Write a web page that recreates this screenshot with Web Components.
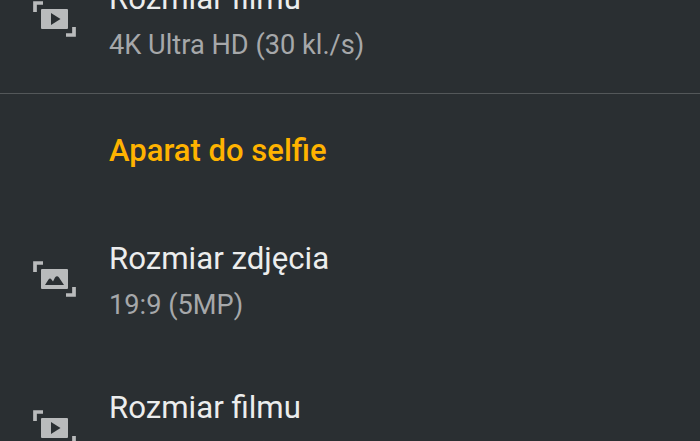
<!DOCTYPE html>
<html>
<head>
<meta charset="utf-8">
<style>
  html, body { margin: 0; height: 441px; overflow: hidden; background: #2a2f32; }
  body { font-family: Roboto, "Liberation Sans", sans-serif; }
  settings-list { margin-top: -47px; }
</style>
</head>
<body>
<settings-list>
  <setting-row icon="video" title="Rozmiar filmu" value="4K Ultra HD (30 kl./s)" divider></setting-row>
  <setting-header>Aparat do selfie</setting-header>
  <setting-row icon="photo" title="Rozmiar zdjęcia" value="19:9 (5MP)"></setting-row>
  <setting-row icon="video" title="Rozmiar filmu" value="4K Ultra HD (30 kl./s)"></setting-row>
</settings-list>

<script>
class SettingsList extends HTMLElement {
  constructor() {
    super();
    this.attachShadow({ mode: 'open' }).innerHTML = `
      <style>
        :host { display: flex; flex-direction: column; }
      </style>
      <slot></slot>
    `;
  }
}

class SettingHeader extends HTMLElement {
  constructor() {
    super();
    this.attachShadow({ mode: 'open' }).innerHTML = `
      <style>
        :host {
          display: flex;
          align-items: center;
          height: 112px;
          padding: 0 0 2px 109px;
          color: #ffb300;
          font-size: 31px;
          font-weight: 500;
        }
      </style>
      <slot></slot>
    `;
  }
}

const ICONS = {
  video: '<path d="M18 12v12l9.5-6z" fill="#2a2f32"/>',
  photo: '<path d="M12 24l3.5-5.5q1.5-2 3 0l1.5 2 2-4q2-2.500 4 0l5 7.500z" fill="#2a2f32"/>'
};

class SettingRow extends HTMLElement {
  constructor() {
    super();
    this.attachShadow({ mode: 'open' });
  }

  connectedCallback() {
    this.render();
  }

  render() {
    const icon = ICONS[this.getAttribute('icon')];
    this.shadowRoot.innerHTML = `
      <style>
        :host {
          display: flex;
          align-items: center;
          height: 148.5px;
          flex: none;
          box-sizing: border-box;
          padding-left: 33px;
          --icon-shift: 6px;
          --text-shift: 2px;
        }
        :host([divider]) {
          height: 141px;
          border-bottom: 1px solid #54585a;
          --icon-shift: 8px;
          --text-shift: 4px;
        }
        svg { width: 43px; height: 36px; flex: none; margin-bottom: var(--icon-shift); }
        .text { margin: 0 0 var(--text-shift) 33px; display: flex; flex-direction: column; gap: 14px; }
        .title { color: #eceded; font-size: 31.2px; line-height: 34px; }
        .value { color: #a6a8aa; font-size: 27.2px; line-height: 30px; }
      </style>
      <svg viewBox="0 0 43 36">
        <path d="M2 11V2h8M41 26v8h-8" fill="none" stroke="#b9bbbc" stroke-width="3.700"/>
        <rect x="8" y="8" width="27" height="20" rx="1" fill="#b9bbbc"/>
        ${icon}
      </svg>
      <div class="text">
        <span class="title">${this.getAttribute('title')}</span>
        <span class="value">${this.getAttribute('value')}</span>
      </div>
    `;
  }
}

customElements.define('settings-list', SettingsList);
customElements.define('setting-header', SettingHeader);
customElements.define('setting-row', SettingRow);
</script>
</body>
</html>
